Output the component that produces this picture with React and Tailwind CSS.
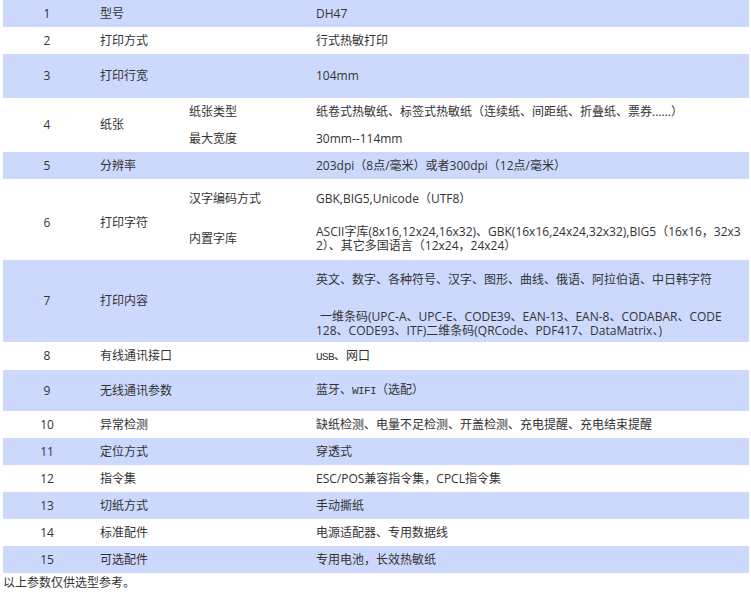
import React from "react";

const BLUE = "bg-[#ccd9fc]";

function Cell({ className = "", children }) {
  return <div className={`flex items-center pl-[9px] ${className}`}>{children}</div>;
}

function Row({ blue, h, no, name, children }) {
  return (
    <div className={`grid grid-cols-[88px_89px_569px] ${h} ${blue ? BLUE : "bg-white"}`}>
      <div className="flex items-center justify-center">{no}</div>
      <Cell>{name}</Cell>
      {children}
    </div>
  );
}

function Simple({ blue, h = "h-[27px]", no, name, value }) {
  return (
    <Row blue={blue} h={h} no={no} name={name}>
      <div className="grid grid-cols-[127px_442px]">
        <div />
        <Cell className="whitespace-nowrap">{value}</Cell>
      </div>
    </Row>
  );
}

const mono = "font-['Liberation_Mono',monospace] text-[11px] tracking-[-0.6px]";

export default function App() {
  return (
    <div className="w-[751px] h-[609px] bg-white pl-[3px] pr-[2px] text-[12px] leading-[14px] text-[#333] font-['Open_Sans','Noto_Sans_CJK_SC',sans-serif]">
      <div className="flex flex-col w-[746px]">
        <Simple blue no="1" name="型号" value="DH47" />
        <Simple no="2" name="打印方式" value="行式热敏打印" />
        <Simple blue h="h-[44px]" no="3" name="打印行宽" value="104mm" />

        {/* 4 纸张 */}
        <Row h="h-[54px]" no="4" name="纸张">
          <div className="flex flex-col">
            <div className="grid grid-cols-[127px_442px] h-[28px]">
              <Cell>纸张类型</Cell>
              <Cell className="whitespace-nowrap">纸卷式热敏纸、标签式热敏纸（连续纸、间距纸、折叠纸、票券......）</Cell>
            </div>
            <div className="grid grid-cols-[127px_442px] h-[26px]">
              <Cell>最大宽度</Cell>
              <Cell>30mm--114mm</Cell>
            </div>
          </div>
        </Row>

        <Simple blue no="5" name="分辨率" value="203dpi（8点/毫米）或者300dpi（12点/毫米）" />

        {/* 6 打印字符 */}
        <Row h="h-[81px]" no={<span className="pt-[6px]">6</span>} name={<span className="pt-[6px]">打印字符</span>}>
          <div className="flex flex-col">
            <div className="grid grid-cols-[127px_442px] h-[39px]">
              <Cell>汉字编码方式</Cell>
              <Cell>GBK,BIG5,Unicode（UTF8）</Cell>
            </div>
            <div className="grid grid-cols-[127px_442px] h-[42px]">
              <Cell>内置字库</Cell>
              <Cell className="whitespace-nowrap">
                <p>
                  ASCII字库(8x16,12x24,16x32)、GBK(16x16,24x24,32x32),BIG5（16x16，32x3
                  <br />2）、其它多国语言（12x24，24x24）
                </p>
              </Cell>
            </div>
          </div>
        </Row>

        {/* 7 打印内容 */}
        <Row blue h="h-[82px]" no="7" name="打印内容">
          <div className="grid grid-cols-[127px_442px]">
            <div />
            <div className="pl-[9px] pt-[13px] whitespace-nowrap">
              <p>英文、数字、各种符号、汉字、图形、曲线、俄语、阿拉伯语、中日韩字符</p>
              <p className="mt-[23px] pl-[4px]">一维条码(UPC-A、UPC-E、CODE39、EAN-13、EAN-8、CODABAR、CODE</p>
              <p>128、CODE93、ITF)二维条码(QRCode、PDF417、DataMatrix、)</p>
            </div>
          </div>
        </Row>

        <Simple
          h="h-[28px]"
          no="8"
          name="有线通讯接口"
          value={
            <span>
              <span className={mono}>USB</span>、网口
            </span>
          }
        />
        <Simple
          blue
          h="h-[41px]"
          no="9"
          name="无线通讯参数"
          value={
            <span>
              蓝牙、<span className={mono}>WIFI</span>（选配）
            </span>
          }
        />
        <Simple no="10" name="异常检测" value="缺纸检测、电量不足检测、开盖检测、充电提醒、充电结束提醒" />
        <Simple blue no="11" name="定位方式" value="穿透式" />
        <Simple no="12" name="指令集" value="ESC/POS兼容指令集，CPCL指令集" />
        <Simple blue no="13" name="切纸方式" value="手动撕纸" />
        <Simple no="14" name="标准配件" value="电源适配器、专用数据线" />
        <Simple blue no="15" name="可选配件" value="专用电池，长效热敏纸" />
      </div>
      <p className="mt-[3px]">以上参数仅供选型参考。</p>
    </div>
  );
}
